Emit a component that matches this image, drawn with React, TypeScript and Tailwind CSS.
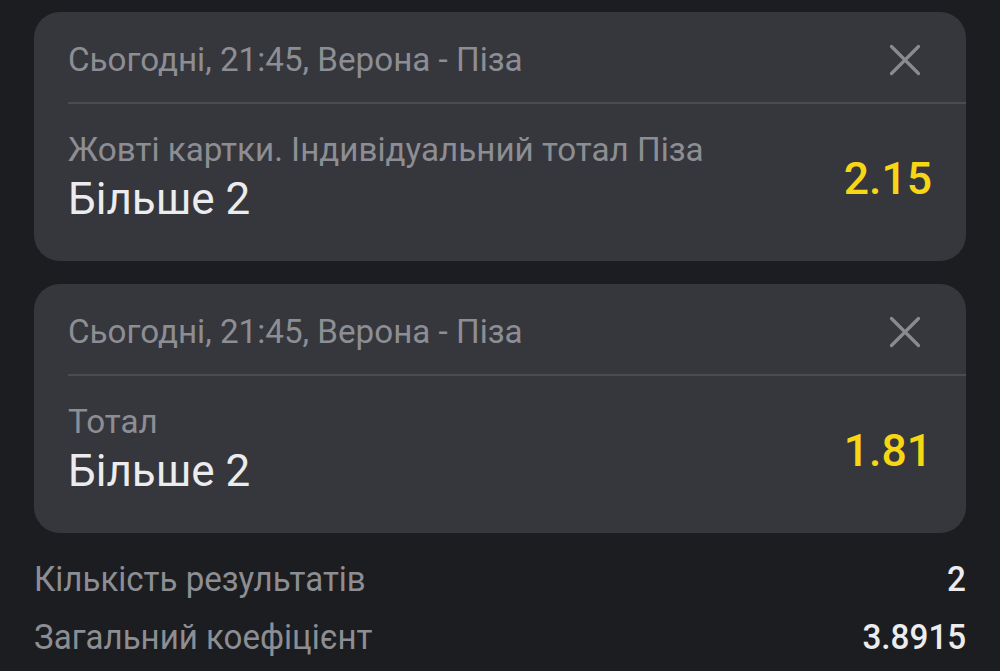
type Bet = { market: string; pick: string; odds: string }

const bets: Bet[] = [
  { market: "Жовті картки. Індивідуальний тотал Піза", pick: "Більше 2", odds: "2.15" },
  { market: "Тотал", pick: "Більше 2", odds: "1.81" },
]

function CloseIcon() {
  return (
    <svg width="32" height="32" viewBox="0 0 32 32" fill="none" className="text-[#8a8b91] mr-[1px]">
      <path d="M2.5 2.5 L29.5 29.5 M29.5 2.5 L2.5 29.5" stroke="currentColor" strokeWidth="3.2" strokeLinecap="round" />
    </svg>
  )
}

function BetCard({ bet }: { bet: Bet }) {
  return (
    <div className="bg-[#36373c] rounded-[26px] pl-[34px] h-[249px] flex flex-col">
      {/* Event header */}
      <div className="flex items-center justify-between h-[92px] pt-[6px] pr-[44px] border-b-2 border-[#4b4c51]">
        <span className="text-[33.2px] text-[#8d8e94]">Сьогодні, 21:45, Верона - Піза</span>
        <CloseIcon />
      </div>
      {/* Selection */}
      <div className="flex items-center justify-between pr-[34px] pt-[26px]">
        <div className="flex flex-col">
          <span className="text-[33.2px] leading-[40px] text-[#8d8e94]">{bet.market}</span>
          <span className="text-[44px] leading-[58px] text-[#ececee]">{bet.pick}</span>
        </div>
        <span className="text-[44.5px] font-medium text-[#f7d715]">{bet.odds}</span>
      </div>
    </div>
  )
}

export default function App() {
  return (
    <div className="w-[1000px] h-[671px] bg-[#1c1d20] px-[34px] pt-[12px] overflow-hidden font-['Roboto',sans-serif]">
      <div className="flex flex-col gap-[23px]">
        {bets.map((bet, i) => (
          <BetCard key={i} bet={bet} />
        ))}
      </div>

      {/* Summary */}
      <div className="flex flex-col mt-[22px]">
        <div className="flex justify-between items-center h-[50px]">
          <span className="text-[35px] text-[#8d8e94] scale-x-[0.945] origin-left">Кількість результатів</span>
          <span className="text-[35px] font-medium text-[#ececee] scale-x-[0.95] origin-right">2</span>
        </div>
        <div className="flex justify-between items-center h-[66px]">
          <span className="text-[35px] text-[#8d8e94] scale-x-[0.945] origin-left">Загальний коефіцієнт</span>
          <span className="text-[35px] font-medium text-[#ececee] scale-x-[0.95] origin-right">3.8915</span>
        </div>
      </div>
    </div>
  )
}
